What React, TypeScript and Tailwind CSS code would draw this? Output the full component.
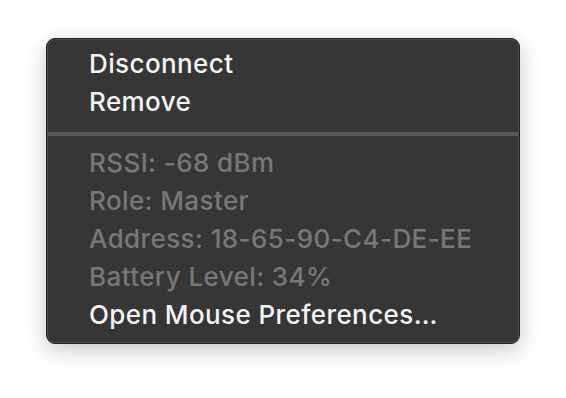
import React from 'react';

const actions = ['Disconnect', 'Remove'];
const info = ['RSSI: -68 dBm', 'Role: Master', 'Address: 18-65-90-C4-DE-EE', 'Battery Level: 34%'];

function MenuItem({ label, disabled }: { label: string; disabled?: boolean }) {
  return (
    <div
      className={`pl-[42px] h-[38px] leading-[38px] text-[26px] tracking-[0.4px] font-medium whitespace-nowrap ${
        disabled ? 'text-[#787878]' : 'text-[#f4f4f4]'
      }`}
    >
      {label}
    </div>
  );
}

export default function App() {
  return (
    <div className="w-[566px] h-[398px] bg-white pt-[38px] pl-[46px] font-['Inter',sans-serif]">
      <div className="w-[474px] h-[306px] rounded-[9px] bg-[#363636] border border-[#1e1e1e] shadow-[0_6px_22px_rgba(0,0,0,0.22),inset_0_0_0_1px_rgba(255,255,255,0.12)] flex flex-col pt-[6px] overflow-hidden">
        {actions.map((a) => (
          <MenuItem key={a} label={a} />
        ))}
        <div className="h-[4px] bg-[#585858] mt-[11px] mb-[8px]" />
        {info.map((a) => (
          <MenuItem key={a} label={a} disabled />
        ))}
        <MenuItem label="Open Mouse Preferences…" />
      </div>
    </div>
  );
}
